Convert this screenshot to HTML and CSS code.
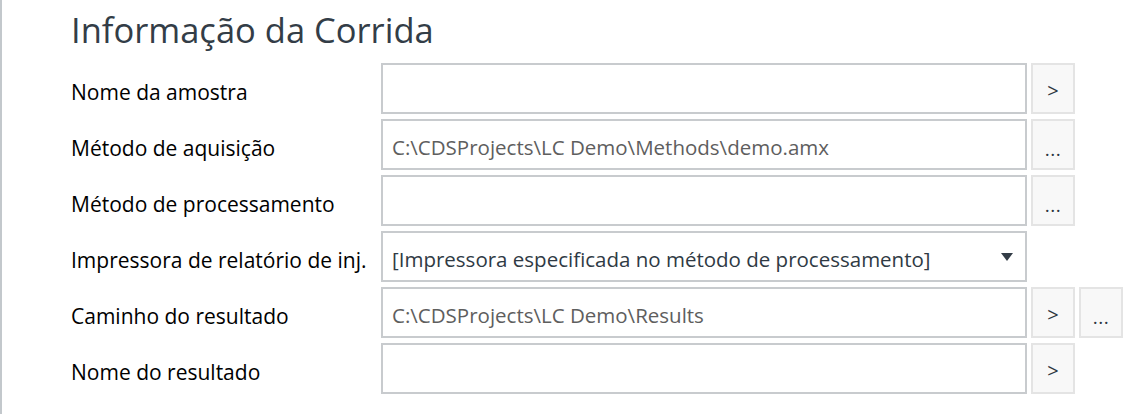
FILE: index.html
```html
<!DOCTYPE html>
<html lang="pt">
<head>
<meta charset="utf-8">
<title>Informação da Corrida</title>
<link rel="stylesheet" href="styles.css">
</head>
<body>
<div class="panel">
  <h1 class="title">Informação da Corrida</h1>
  <div class="form">
    <div class="label">Nome da amostra</div>
    <div class="field"></div>
    <div class="btns"><span class="btn">&gt;</span></div>

    <div class="label">Método de aquisição</div>
    <div class="field"><span class="value">C:\CDSProjects\LC Demo\Methods\demo.amx</span></div>
    <div class="btns"><span class="btn dots">...</span></div>

    <div class="label">Método de processamento</div>
    <div class="field"></div>
    <div class="btns"><span class="btn dots">...</span></div>

    <div class="label">Impressora de relatório de inj.</div>
    <div class="field select"><span class="value dark">[Impressora especificada no método de processamento]</span><span class="caret"></span></div>
    <div class="btns"></div>

    <div class="label">Caminho do resultado</div>
    <div class="field"><span class="value">C:\CDSProjects\LC Demo\Results</span></div>
    <div class="btns"><span class="btn">&gt;</span><span class="btn dots">...</span></div>

    <div class="label">Nome do resultado</div>
    <div class="field"></div>
    <div class="btns"><span class="btn">&gt;</span></div>
  </div>
</div>
</body>
</html>
```
FILE: styles.css
```css
html, body {
  margin: 0;
  padding: 0;
  background: #ffffff;
}
.panel {
  box-sizing: border-box;
  height: 414px;
  border-left: 2px solid #c3c8cc;
  padding: 7px 0 0 69px;
  font-family: "Open Sans", "Noto Sans", sans-serif;
}
.title {
  margin: 0 0 10px 0;
  font-weight: 400;
  font-size: 34.5px;
  line-height: 46px;
  color: #333d47;
}
.form {
  display: grid;
  grid-template-columns: 310px 646px auto;
  grid-auto-rows: 51px;
  row-gap: 5px;
}
.label {
  display: flex;
  align-items: center;
  font-size: 21px;
  color: #000000;
  padding-top: 6px;
}
.field {
  box-sizing: border-box;
  border: 2px solid #c8cbce;
  display: flex;
  align-items: center;
  padding: 0 10px 0 9px;
  background: #fff;
}
.value {
  font-size: 20.5px;
  color: #5e5e5e;
  padding-top: 4px;
}
.value.dark {
  color: #2f3a44;
}
.select {
  justify-content: space-between;
}
.caret {
  width: 0;
  height: 0;
  border-left: 6px solid transparent;
  border-right: 6px solid transparent;
  border-top: 8px solid #333d47;
  margin-right: 2px;
}
.btns {
  display: flex;
  gap: 4px;
  padding-left: 4px;
}
.btn {
  box-sizing: border-box;
  width: 44px;
  height: 51px;
  border: 2px solid #e4e4e4;
  background: #f8f8f8;
  display: flex;
  align-items: center;
  justify-content: center;
  font-size: 20px;
  color: #2c3640;
  padding-top: 4px;
}
.btn.dots {
  font-size: 19px;
  padding-top: 8px;
  letter-spacing: 0.5px;
}
```
